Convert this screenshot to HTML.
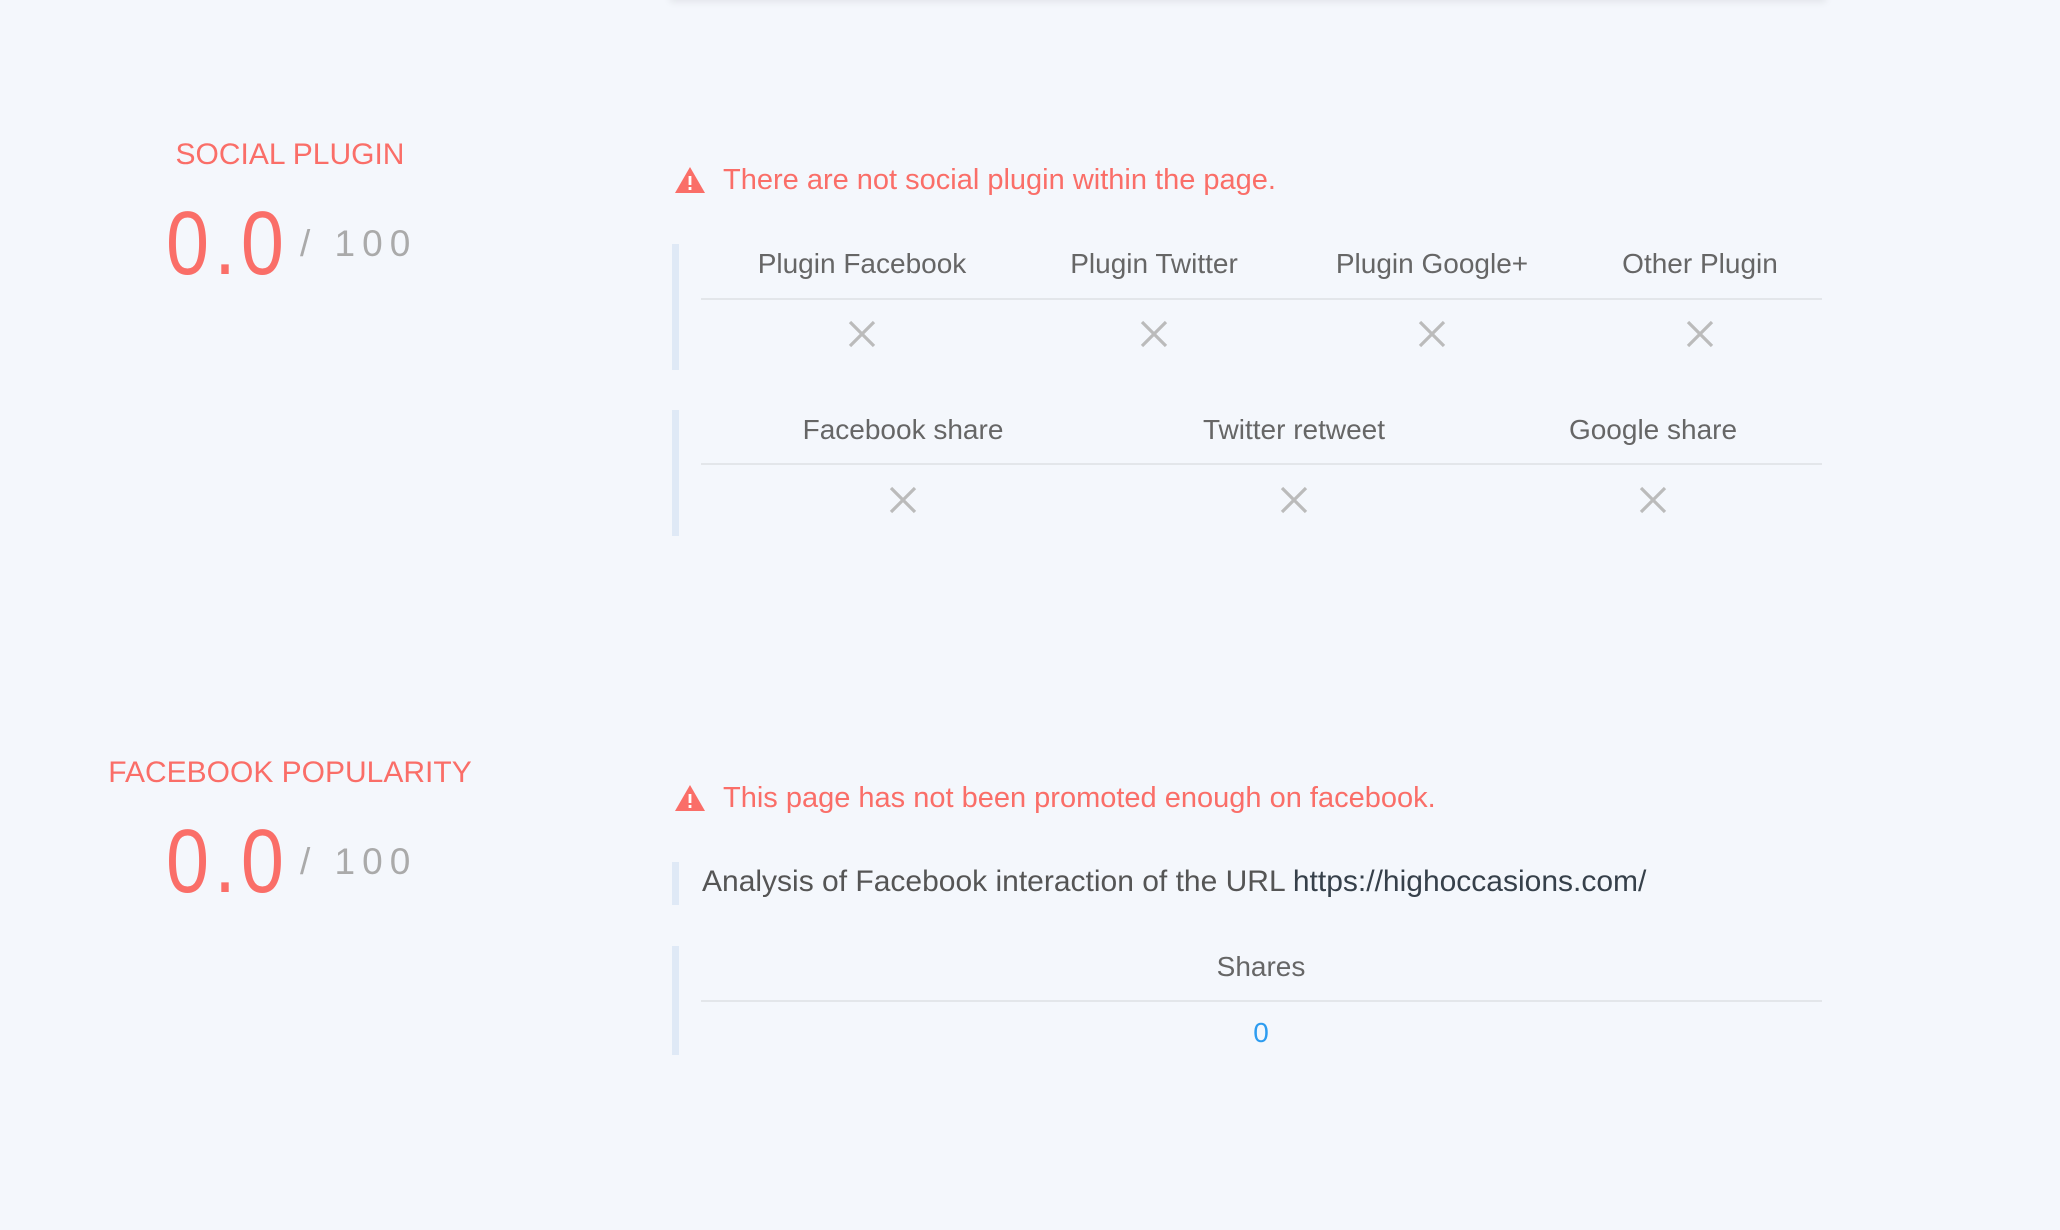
<!DOCTYPE html>
<html><head><meta charset="utf-8"><style>
body{margin:0;width:2060px;height:1230px;background:#f4f7fc;font-family:"Liberation Sans",sans-serif;position:relative;overflow:hidden}
.a{position:absolute;white-space:nowrap}
.c{transform:translateX(-50%)}
.title{font-size:30px;color:#fa6e68;font-weight:300}
.score{font-size:90px;color:#fa6e68;letter-spacing:6px;transform:scaleX(.86);transform-origin:left top;line-height:1}
.out{font-size:37px;color:#aaa;letter-spacing:7px;line-height:1}
.bar{position:absolute;left:672px;width:7px;background:#dfe9f6}
.line{position:absolute;left:701px;width:1121px;height:2px;background:#e3e6ea}
.h{font-size:28px;color:#666}
.x{position:absolute;width:28px;height:28px;transform:translate(-50%,-50%)}
.warn{font-size:29px;color:#fa6e68}
.shadow{position:absolute;left:670px;top:-20px;width:1156px;height:20px;box-shadow:0 2px 8px rgba(0,0,0,.08);background:#f4f7fc}
</style></head><body>
<div class="shadow"></div>

<div class="a c title" style="left:290px;top:138px">SOCIAL PLUGIN</div>
<div class="a score" style="left:166px;top:199px">0.0</div>
<div class="a out" style="left:300px;top:225px">/ 100</div>

<svg class="a" style="left:674px;top:166px" width="32" height="28" viewBox="0 0 32 28"><path d="M16 1 L31 27 L1 27Z" fill="#fa6e68"/><rect x="14.6" y="10" width="2.8" height="9" fill="#fff"/><rect x="14.6" y="21" width="2.8" height="3" fill="#fff"/></svg>
<div class="a warn" style="left:723px;top:164px">There are not social plugin within the page.</div>

<div class="bar" style="top:244px;height:126px"></div>
<div class="a c h" style="left:862px;top:248px">Plugin Facebook</div>
<div class="a c h" style="left:1154px;top:248px">Plugin Twitter</div>
<div class="a c h" style="left:1432px;top:248px">Plugin Google+</div>
<div class="a c h" style="left:1700px;top:248px">Other Plugin</div>
<div class="line" style="top:298px"></div>

<div class="bar" style="top:410px;height:126px"></div>
<div class="a c h" style="left:903px;top:414px">Facebook share</div>
<div class="a c h" style="left:1294px;top:414px">Twitter retweet</div>
<div class="a c h" style="left:1653px;top:414px">Google share</div>
<div class="line" style="top:463px"></div>

<svg width="0" height="0" style="position:absolute"><defs><g id="xx"><path d="M2 2L26 26M26 2L2 26" stroke="#bbb" stroke-width="3.2" fill="none"/></g></defs></svg>
<svg class="x" style="left:862px;top:334px" viewBox="0 0 28 28"><use href="#xx"/></svg>
<svg class="x" style="left:1154px;top:334px" viewBox="0 0 28 28"><use href="#xx"/></svg>
<svg class="x" style="left:1432px;top:334px" viewBox="0 0 28 28"><use href="#xx"/></svg>
<svg class="x" style="left:1700px;top:334px" viewBox="0 0 28 28"><use href="#xx"/></svg>
<svg class="x" style="left:903px;top:500px" viewBox="0 0 28 28"><use href="#xx"/></svg>
<svg class="x" style="left:1294px;top:500px" viewBox="0 0 28 28"><use href="#xx"/></svg>
<svg class="x" style="left:1653px;top:500px" viewBox="0 0 28 28"><use href="#xx"/></svg>

<div class="a c title" style="left:290px;top:756px">FACEBOOK POPULARITY</div>
<div class="a score" style="left:166px;top:817px">0.0</div>
<div class="a out" style="left:300px;top:843px">/ 100</div>

<svg class="a" style="left:674px;top:784px" width="32" height="28" viewBox="0 0 32 28"><path d="M16 1 L31 27 L1 27Z" fill="#fa6e68"/><rect x="14.6" y="10" width="2.8" height="9" fill="#fff"/><rect x="14.6" y="21" width="2.8" height="3" fill="#fff"/></svg>
<div class="a warn" style="left:723px;top:782px">This page has not been promoted enough on facebook.</div>

<div class="bar" style="top:862px;height:43px"></div>
<div class="a" style="left:702px;top:865px;font-size:30px;color:#555">Analysis of Facebook interaction of the URL <span style="color:#36404a">https://highoccasions.com/</span></div>

<div class="bar" style="top:946px;height:109px"></div>
<div class="a c h" style="left:1261px;top:951px">Shares</div>
<div class="line" style="top:1000px"></div>
<div class="a c" style="left:1261px;top:1017px;font-size:28px;color:#2d9cf0">0</div>
</body></html>
